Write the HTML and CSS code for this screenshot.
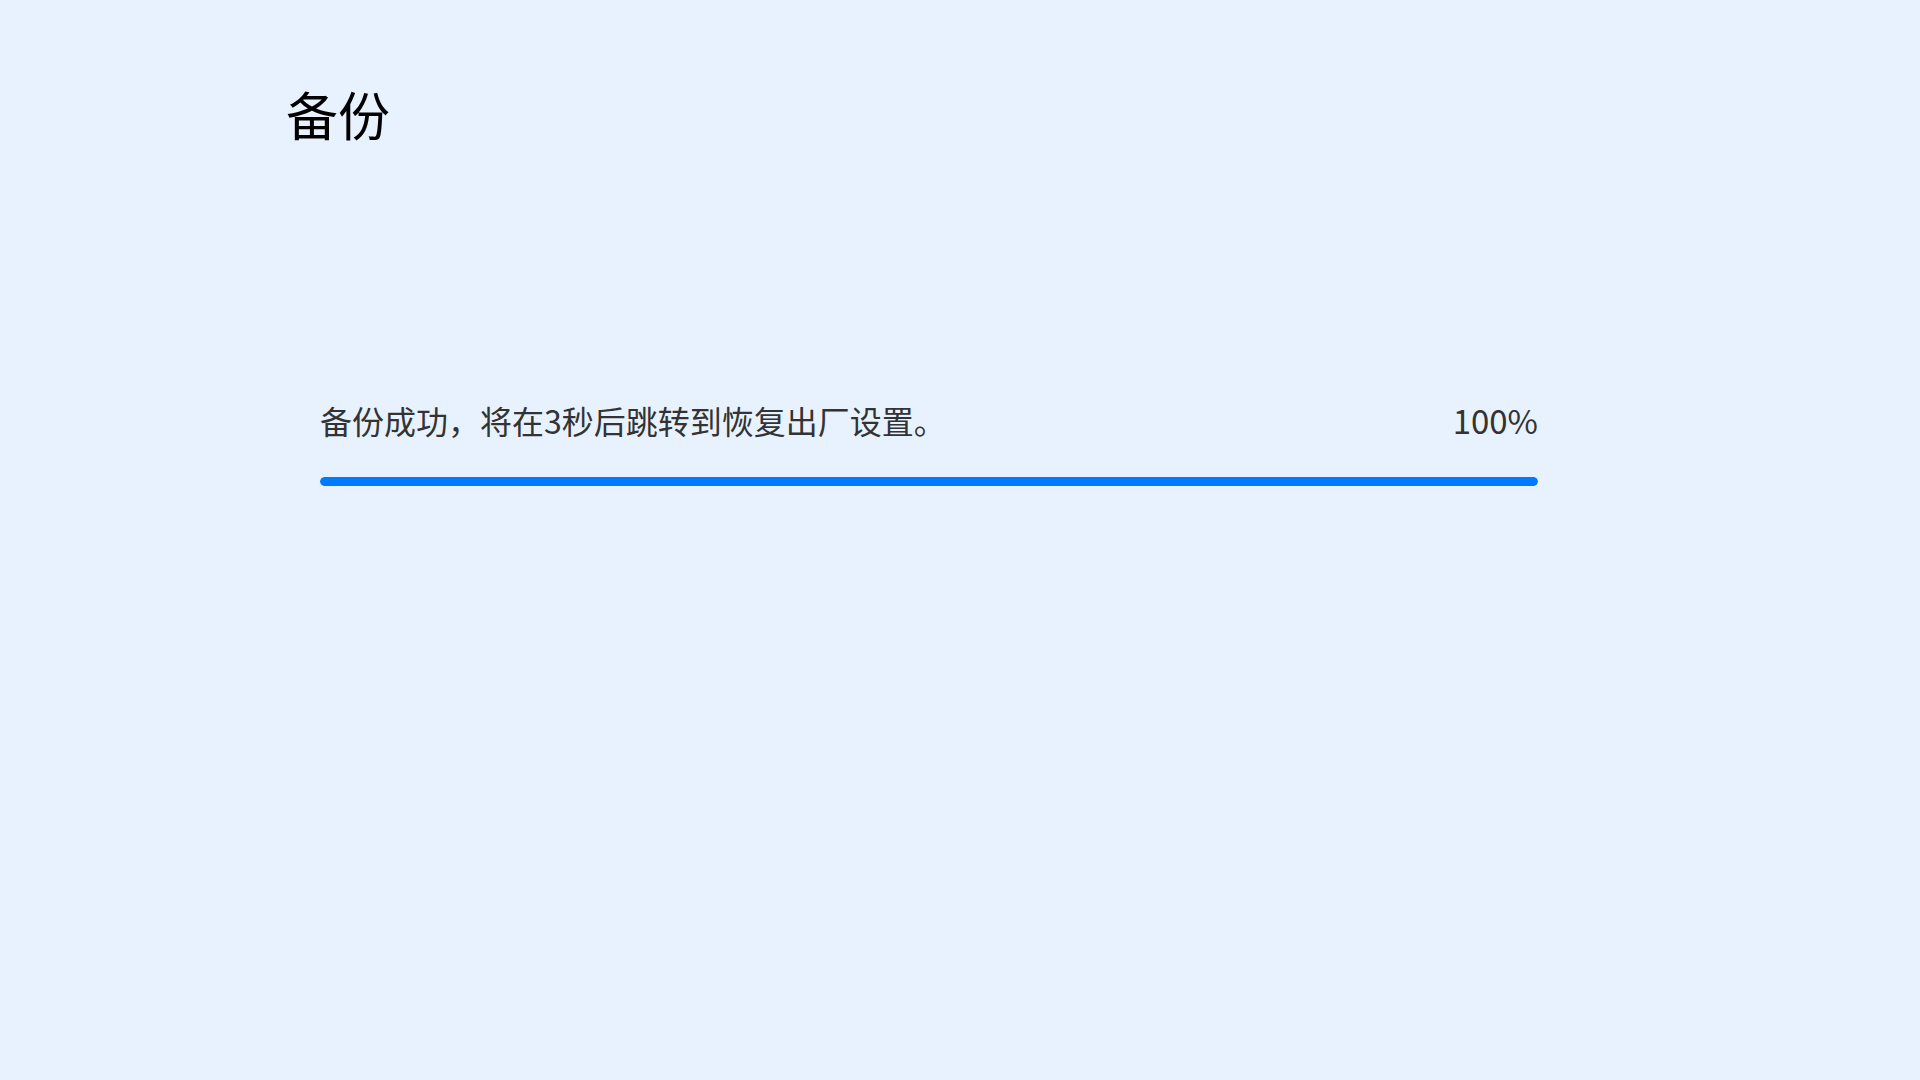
FILE: index.html
```html
<!DOCTYPE html>
<html lang="zh-CN">
<head>
<meta charset="utf-8">
<title>备份</title>
<link rel="stylesheet" href="styles.css">
</head>
<body>
<div class="page">
  <h1 class="title">备份</h1>
  <section class="progress">
    <div class="progress-row">
      <span class="progress-msg">备份成功<span class="punct">，</span>将在3秒后跳转到恢复出厂设置。</span>
      <span class="progress-pct">100%</span>
    </div>
    <div class="progress-track"><div class="progress-fill" style="width:100%"></div></div>
  </section>
</div>
</body>
</html>
```

FILE: styles.css
```css
html, body {
  margin: 0;
  padding: 0;
}
body {
  background: #e8f2ff;
  width: 1920px;
  height: 1080px;
  overflow: hidden;
  font-family: "Noto Sans CJK SC", "Noto Sans", sans-serif;
}
.page {
  padding: 80px 0 0 286px;
}
.title {
  margin: 0;
  font-size: 52px;
  font-weight: 400;
  line-height: 68px;
  color: #000;
}
.progress {
  margin-left: 34px;
  width: 1218px;
  margin-top: 250px;
}
.progress-row {
  display: flex;
  justify-content: space-between;
  align-items: center;
  font-size: 32px;
  line-height: 44px;
  color: #333;
}
.punct {
  font-family: "Noto Sans CJK TC", sans-serif;
}
.progress-pct {
  font-size: 33px;
}
.progress-track {
  margin-top: 35px;
  height: 9px;
  border-radius: 5px;
  background: #cfe2fb;
  overflow: hidden;
}
.progress-fill {
  height: 100%;
  background: #007aff;
  border-radius: 5px;
}
```
